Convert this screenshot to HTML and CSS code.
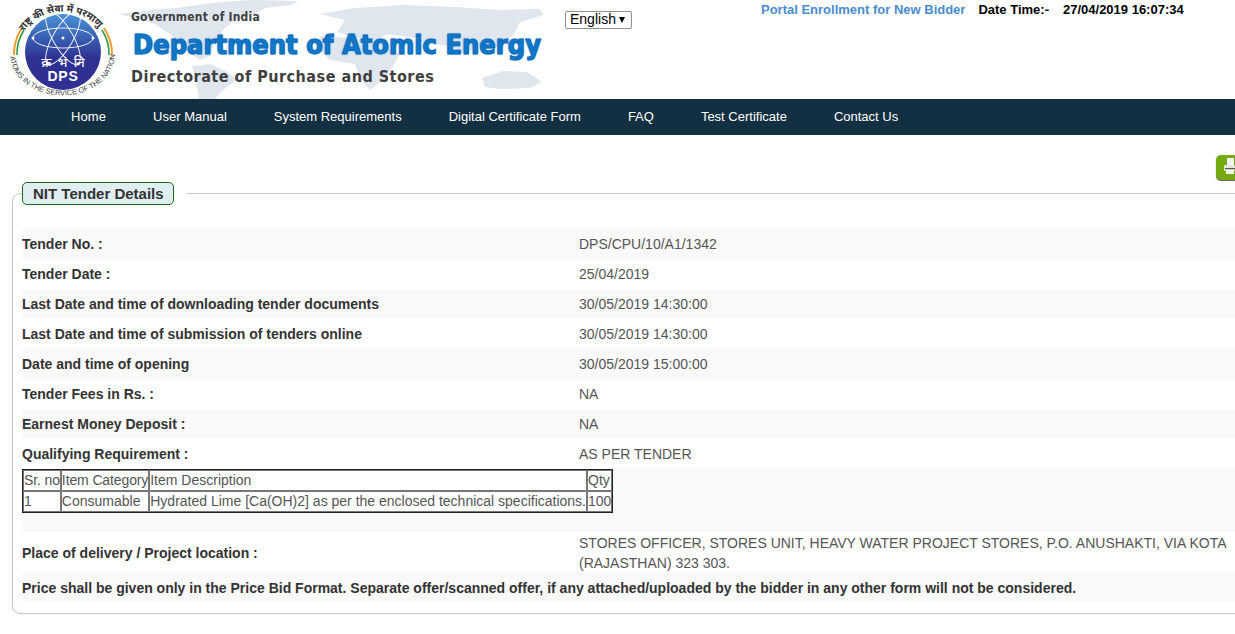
FILE: index.html
```html
<!DOCTYPE html>
<html lang="en">
<head>
<meta charset="utf-8">
<title>NIT Tender Details</title>
<link rel="stylesheet" href="styles.css">
</head>
<body>
<header class="masthead">
  <svg class="map" viewBox="0 0 450 99" aria-hidden="true">
    <g fill="#dfe6ee">
      <path d="M3 14 L30 11 L45 9 L62 8 L95 3 L135 0 L183 1 L176 5 L150 8 L140 14 L120 20 L108 30 L100 42 L95 56 L85 60 L70 50 L55 34 L40 24 L20 18 Z"/>
      <path d="M77 66 L95 64 L112 72 L122 80 L108 90 L100 99 L84 99 L82 85 Z"/>
      <path d="M205 14 L240 8 L290 5 L340 7 L385 10 L425 9 L428 15 L405 22 L398 36 L385 48 L365 44 L350 54 L335 46 L312 44 L300 38 L272 34 L262 40 L240 38 L222 32 L230 20 Z"/>
      <path d="M205 36 L262 40 L285 54 L278 66 L268 80 L255 90 L246 80 L240 64 L215 60 L203 48 Z"/>
      <path d="M367 78 L388 71 L412 72 L427 82 L415 88 L385 89 L370 87 Z"/>
    </g>
  </svg>
  <svg class="logo" viewBox="0 0 125 99" role="img" aria-label="DPS">
    <defs>
      <linearGradient id="disc" x1="0" y1="0" x2="0" y2="1">
        <stop offset="0" stop-color="#4a93d8"/>
        <stop offset=".3" stop-color="#3a62b4"/>
        <stop offset=".58" stop-color="#2e3192"/>
        <stop offset="1" stop-color="#2e3192"/>
      </linearGradient>
      <path id="arcTop" d="M17 48 A46 43 0 0 1 107 44"/>
      <path id="arcBottom" d="M10 55 A52 41 0 0 0 115 53"/>
    </defs>
    <path d="M14 55 A50 48 0 0 1 22 28" fill="none" stroke="#f39a2e" stroke-width="2"/>
    <path d="M17 55 A47 45 0 0 1 24 30" fill="none" stroke="#2e9a48" stroke-width="1.6"/>
    <path d="M112 55 A50 48 0 0 0 104 28" fill="none" stroke="#f39a2e" stroke-width="2"/>
    <path d="M109 55 A47 45 0 0 0 102 30" fill="none" stroke="#2e9a48" stroke-width="1.6"/>
    <circle cx="63" cy="52" r="38" fill="url(#disc)"/>
    <g fill="none" stroke="#fff" stroke-width="1" opacity=".9">
      <ellipse cx="63" cy="38" rx="30" ry="10"/>
      <ellipse cx="63" cy="38" rx="30" ry="10" transform="rotate(60 63 38)"/>
      <ellipse cx="63" cy="38" rx="30" ry="10" transform="rotate(120 63 38)"/>
    </g>
    <g fill="#fff">
      <circle cx="33" cy="38" r="1.5"/><circle cx="93" cy="38" r="1.5"/>
      <circle cx="78" cy="64" r="1.5"/><circle cx="48" cy="64" r="1.5"/>
      <circle cx="63" cy="38" r="1.5"/>
    </g>
    <text class="logo-hi" x="63" y="67" text-anchor="middle">क्र भं नि</text>
    <text class="logo-dps" x="63" y="81" text-anchor="middle">DPS</text>
    <text class="logo-ring-hi"><textPath href="#arcTop" startOffset="50%" text-anchor="middle">राष्ट्र की सेवा में परमाणु</textPath></text>
    <text class="logo-ring"><textPath href="#arcBottom" startOffset="50%" text-anchor="middle">ATOMS IN THE SERVICE OF THE NATION</textPath></text>
  </svg>
  <div class="brand">
    <div class="brand-gov">Government of India</div>
    <div class="brand-dept">Department of Atomic Energy</div>
    <div class="brand-dir">Directorate of Purchase and Stores</div>
  </div>
  <div class="lang">
    <div class="lang-box">
      <select class="lang-select"><option>English</option></select>
    </div>
  </div>
  <div class="top-info">
    <a class="enroll" href="#">Portal Enrollment for New Bidder</a>
    <span class="dt-label">Date Time:-</span>
    <span class="dt-value">27/04/2019 16:07:34</span>
  </div>
</header>
<nav class="nav">
  <a href="#">Home</a>
  <a href="#">User Manual</a>
  <a href="#">System Requirements</a>
  <a href="#">Digital Certificate Form</a>
  <a href="#">FAQ</a>
  <a href="#">Test Certificate</a>
  <a href="#">Contact Us</a>
</nav>
<main class="main">
  <div class="print-row">
    <div class="print-btn">
      <svg viewBox="0 0 11 18" class="print-icon" aria-hidden="true">
        <rect x="3" y="0" width="7" height="7" fill="#f4f4f4"/>
        <rect x="0" y="7" width="11" height="6" rx="1" fill="#e4e6e0"/>
        <rect x="1" y="10" width="10" height="1.2" fill="#55613f"/>
        <rect x="2" y="12" width="8" height="4" fill="#f4f4f4"/>
      </svg>
    </div>
  </div>
  <fieldset class="panel">
    <legend class="panel-legend"><span class="panel-title">NIT Tender Details</span></legend>
    <div class="rows">
      <div class="row shade"><div class="lbl">Tender No. :</div><div class="val">DPS/CPU/10/A1/1342</div></div>
      <div class="row"><div class="lbl">Tender Date :</div><div class="val">25/04/2019</div></div>
      <div class="row shade"><div class="lbl">Last Date and time of downloading tender documents</div><div class="val">30/05/2019 14:30:00</div></div>
      <div class="row"><div class="lbl">Last Date and time of submission of tenders online</div><div class="val">30/05/2019 14:30:00</div></div>
      <div class="row shade"><div class="lbl">Date and time of opening</div><div class="val">30/05/2019 15:00:00</div></div>
      <div class="row"><div class="lbl">Tender Fees in Rs. :</div><div class="val">NA</div></div>
      <div class="row shade"><div class="lbl">Earnest Money Deposit :</div><div class="val">NA</div></div>
      <div class="row"><div class="lbl">Qualifying Requirement :</div><div class="val">AS PER TENDER</div></div>
      <div class="table-row shade">
        <table class="items">
          <tr><td class="tight">Sr. no</td><td class="tight">Item Category</td><td>Item Description</td><td>Qty</td></tr>
          <tr><td>1</td><td>Consumable</td><td>Hydrated Lime [Ca(OH)2] as per the enclosed technical specifications.</td><td>100</td></tr>
        </table>
      </div>
      <div class="row row-tall"><div class="lbl">Place of delivery / Project location :</div><div class="val val-wrap">STORES OFFICER, STORES UNIT, HEAVY WATER PROJECT STORES, P.O. ANUSHAKTI, VIA KOTA (RAJASTHAN) 323 303.</div></div>
      <div class="note shade">Price shall be given only in the Price Bid Format. Separate offer/scanned offer, if any attached/uploaded by the bidder in any other form will not be considered.</div>
    </div>
  </fieldset>
</main>
</body>
</html>
```
FILE: styles.css
```css
* { box-sizing: border-box; }
html, body { margin: 0; padding: 0; }
body {
  width: 1235px;
  height: 634px;
  overflow: hidden;
  background: #fff;
  font-family: "Liberation Sans", Arial, sans-serif;
  font-size: 14px;
  color: #555;
}
a { text-decoration: none; }

.masthead {
  position: relative;
  height: 99px;
  display: flex;
  align-items: flex-start;
}
.map { position: absolute; left: 115px; top: 0; width: 450px; height: 99px; }
.logo { position: relative; flex: none; width: 125px; height: 99px; }
.logo-hi { font: 500 13px "Noto Sans", "Noto Sans Devanagari", sans-serif; fill: #fff; word-spacing: 3px; }
.logo-dps { font: 700 14px "Liberation Sans", sans-serif; fill: #fff; letter-spacing: .8px; }
.logo-ring-hi { font: 700 10px "Noto Sans", "Noto Sans Devanagari", sans-serif; fill: #333; }
.logo-ring { font: 400 7.4px "Liberation Sans", sans-serif; fill: #444; }

.brand { position: relative; flex: none; width: 445px; margin-left: 6px; padding-top: 8px; font-family: "DejaVu Sans", sans-serif; font-weight: 700; color: #3f3f3f; }
.brand-gov { font-size: 12px; line-height: 18px; font-stretch: condensed; letter-spacing: .2px; }
.brand-dept {
  font-size: 27px;
  line-height: 36px;
  font-stretch: condensed;
  color: #1078c8;
  -webkit-text-stroke: 1px #1268b8;
  text-shadow: 0 0 2px #6fb7ea, 0 0 2px #6fb7ea;
  margin: 1px 0 0 2px;
  white-space: nowrap;
}
.brand-dir { font-size: 16px; line-height: 22px; margin: 3px 0 0 0; letter-spacing: .5px; font-stretch: condensed; white-space: nowrap; }

.lang { position: relative; flex: none; width: 196px; padding-top: 11px; margin-left: -11px; }
.lang-box { position: relative; width: 67px; height: 18px; }
.lang-box::after {
  content: "";
  position: absolute;
  left: 54px;
  top: 6px;
  border-left: 3.5px solid transparent;
  border-right: 3.5px solid transparent;
  border-top: 6px solid #000;
}
.lang-select {
  appearance: none;
  display: block;
  width: 67px;
  height: 18px;
  padding: 0 0 1px 4px;
  font-family: "Liberation Sans", sans-serif;
  font-size: 14px;
  line-height: 15px;
  color: #000;
  background: #fff;
  border: 1px solid #8f8f8f;
  border-radius: 2px;
}

.top-info { position: relative; flex: none; display: flex; padding-top: 2px; font-size: 13px; font-weight: 700; line-height: 15px; }
.enroll { color: #4a8cd0; }
.dt-label { color: #000; margin-left: 13px; }
.dt-value { color: #000; margin-left: 14px; }

.nav {
  height: 36px;
  background: #132f42;
  display: flex;
  align-items: flex-start;
  padding-left: 71px;
  gap: 47px;
}
.nav a { color: #fff; font-size: 13px; line-height: 35px; }
.nav a:first-child { letter-spacing: .1px; }

.main { padding-top: 20px; }
.print-row { display: flex; justify-content: flex-end; height: 26px; overflow: hidden; }
.print-btn { width: 19px; height: 25px; background: #74aa10; border-radius: 5px 0 0 5px; box-shadow: 0 1px 1px #555; overflow: hidden; padding: 3px 0 0 8px; }
.print-icon { display: block; width: 11px; height: 18px; }

.panel {
  margin: 1px 0 0 12px;
  width: 1240px;
  min-width: 0;
  padding: 0 0 10px 9px;
  border: 1px solid #c4c4c4;
  border-radius: 8px;
  height: 432px;
}
.panel-legend { margin: 0; padding: 0 13px 0 0; }
.panel-title {
  display: block;
  padding: 0 10px;
  height: 23px;
  line-height: 21px;
  width: 152px;
  font-size: 15px;
  font-weight: 700;
  color: #333;
  background: #e1eef1;
  border: 1px solid #1a6a1a;
  border-radius: 5px;
  white-space: nowrap;
}
.rows { padding-top: 24px; }
.row { display: flex; height: 30px; align-items: center; }
.shade { background: #f9f9f9; }
.lbl { flex: none; width: 557px; font-weight: 700; color: #333; }
.val { flex: none; width: 656px; }
.row-tall { height: 41px; }
.val-wrap { line-height: 20px; }
.table-row { height: 63px; padding-bottom: 15px; }
.items { border-collapse: separate; border-spacing: 0; border: 1px solid #222; background: #fff; }
.items td { border: 1px solid #777; padding: 0; line-height: 19px; white-space: nowrap; }
.items .tight { letter-spacing: -.12px; }
.note { height: 28px; line-height: 30px; font-weight: 700; color: #333; white-space: nowrap; }
```
